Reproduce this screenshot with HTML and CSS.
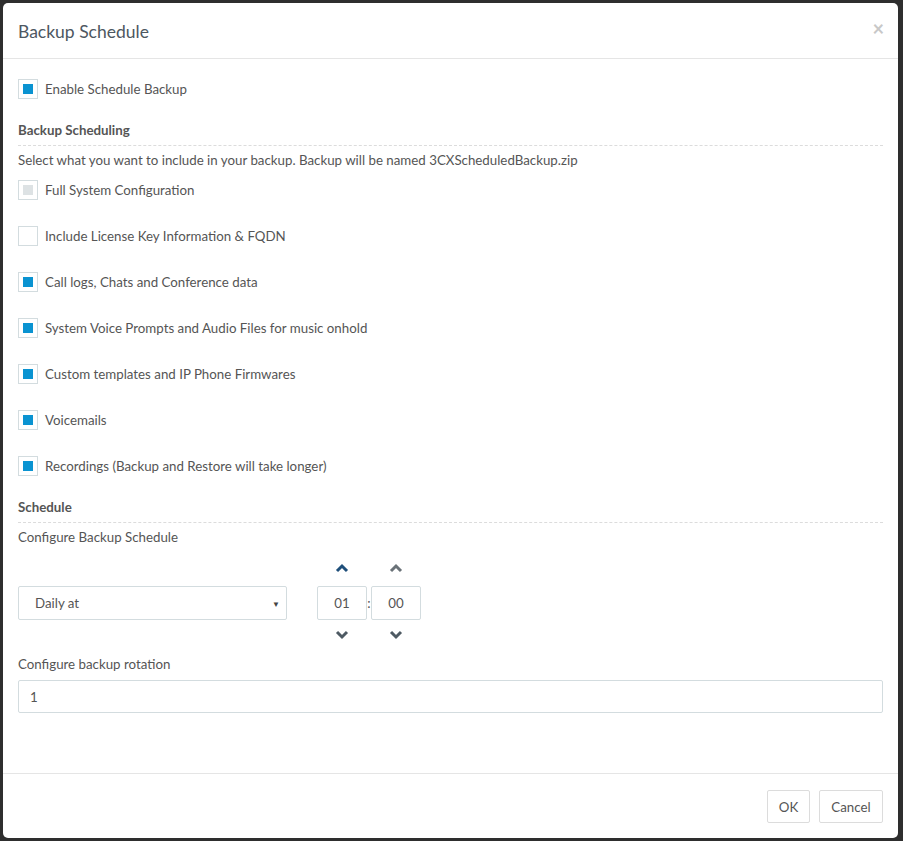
FILE: index.html
```html
<!DOCTYPE html>
<html>
<head>
    <meta charset="UTF-8">
    <title>Backup Schedule</title>
    <link rel="stylesheet" href="styles.css">
</head>
<body>
    <div class="modal">
        <div class="modal-header">
            <h3 class="modal-title">Backup Schedule</h3>
            <span class="close-btn">&times;</span>
        </div>

        <div class="modal-body">
            <label class="check-row">
                <span class="box checked"></span>
                <span>Enable Schedule Backup</span>
            </label>

            <h4 class="section-title">Backup Scheduling</h4>
            <div class="section-desc">Select what you want to include in your backup. Backup will be named 3CXScheduledBackup.zip</div>

            <div class="check-list">
                <label class="check-row"><span class="box disabled"></span><span>Full System Configuration</span></label>
                <label class="check-row"><span class="box"></span><span>Include License Key Information &amp; FQDN</span></label>
                <label class="check-row"><span class="box checked"></span><span>Call logs, Chats and Conference data</span></label>
                <label class="check-row"><span class="box checked"></span><span>System Voice Prompts and Audio Files for music onhold</span></label>
                <label class="check-row"><span class="box checked"></span><span>Custom templates and IP Phone Firmwares</span></label>
                <label class="check-row"><span class="box checked"></span><span>Voicemails</span></label>
                <label class="check-row"><span class="box checked"></span><span>Recordings (Backup and Restore will take longer)</span></label>
            </div>

            <h4 class="section-title schedule-title">Schedule</h4>
            <div class="section-desc">Configure Backup Schedule</div>

            <div class="schedule-row">
                <div class="select-box">
                    <span>Daily at</span>
                    <span class="caret">&#9660;</span>
                </div>
                <div class="time-picker">
                    <div class="time-col">
                        <svg class="chev up-active" width="14" height="24" viewBox="0 0 14 24"><polyline points="2,15 7,10 12,15" fill="none" stroke="currentColor" stroke-width="3"/></svg>
                        <div class="time-input">01</div>
                        <svg class="chev" width="14" height="24" viewBox="0 0 14 24"><polyline points="2,9 7,14 12,9" fill="none" stroke="currentColor" stroke-width="3"/></svg>
                    </div>
                    <div class="colon">:</div>
                    <div class="time-col">
                        <svg class="chev up-grey" width="14" height="24" viewBox="0 0 14 24"><polyline points="2,15 7,10 12,15" fill="none" stroke="currentColor" stroke-width="3"/></svg>
                        <div class="time-input">00</div>
                        <svg class="chev" width="14" height="24" viewBox="0 0 14 24"><polyline points="2,9 7,14 12,9" fill="none" stroke="currentColor" stroke-width="3"/></svg>
                    </div>
                </div>
            </div>

            <div class="field-label">Configure backup rotation</div>
            <div class="text-input">1</div>
        </div>

        <div class="modal-footer">
            <button class="btn btn-ok">OK</button>
            <button class="btn btn-cancel">Cancel</button>
        </div>
    </div>
</body>
</html>
```

FILE: styles.css
```css
body {
    margin: 0;
    background: #2e2e2e;
    font-family: Lato, "Open Sans", sans-serif;
    font-size: 13.3px;
    color: #555;
}

.modal {
    margin: 3px 0 0 3px;
    width: 895px;
    height: 835px;
    background: #fff;
    border-radius: 5px;
    display: flex;
    flex-direction: column;
}

.modal-header {
    height: 55px;
    border-bottom: 1px solid #e5e5e5;
    display: flex;
    align-items: center;
    justify-content: space-between;
    padding: 0 15px;
}

.modal-title {
    margin: 0;
    font-size: 17.5px;
    font-weight: normal;
    color: #4d5761;
    padding-top: 2px;
}

.close-btn {
    color: #c8c8c8;
    font-size: 20px;
    font-weight: bold;
    margin-top: -6px;
    margin-right: -1px;
}

.modal-body {
    flex: 1;
    padding: 20px 15px 0 15px;
}

.check-row {
    display: flex;
    align-items: center;
    gap: 7px;
    height: 20px;
    line-height: 20px;
}

.box {
    width: 18px;
    height: 18px;
    border: 1px solid #d3dcdf;
    box-sizing: content-box;
    position: relative;
}

.box.checked::after,
.box.disabled::after {
    content: "";
    position: absolute;
    left: 4px;
    top: 4px;
    width: 10px;
    height: 10px;
    background: #0a93d1;
}

.box.disabled::after {
    background: #dde2e4;
}

.section-title {
    margin: 21px 0 0 0;
    font-size: 13.3px;
    font-weight: bold;
    line-height: 20px;
    padding-bottom: 5px;
    border-bottom: 1px dashed #dcdcdc;
}

.schedule-title {
    margin-top: 21px;
}

.section-desc {
    margin-top: 4px;
    line-height: 20px;
}

.check-list {
    margin-top: 10px;
    display: flex;
    flex-direction: column;
    gap: 26px;
}

.schedule-row {
    display: flex;
    margin-top: 9px;
}

.select-box {
    margin-top: 30px;
    height: 32px;
    border: 1px solid #d3dcdf;
    border-radius: 2px;
    display: flex;
    align-items: center;
    justify-content: space-between;
    padding: 0 6px 0 16px;
    box-sizing: content-box;
    width: 245px;
}

.caret {
    font-size: 8px;
    color: #444;
    margin-top: 1px;
}

.time-picker {
    display: flex;
    margin-left: 30px;
}

.time-col {
    display: flex;
    flex-direction: column;
    align-items: center;
}

.time-input {
    margin: 6px 0 3px 0;
    width: 48px;
    height: 32px;
    border: 1px solid #d3dcdf;
    border-radius: 2px;
    display: flex;
    align-items: center;
    justify-content: center;
}

.chev {
    color: #4e5a63;
}

.chev.up-active {
    color: #1f4f7a;
}

.chev.up-grey {
    color: #6a7278;
}

.colon {
    width: 4px;
    margin-top: 30px;
    height: 34px;
    line-height: 34px;
    text-align: center;
}

.field-label {
    margin-top: 7px;
    line-height: 20px;
}

.text-input {
    margin-top: 6px;
    height: 31px;
    border: 1px solid #d3dcdf;
    border-radius: 2px;
    display: flex;
    align-items: center;
    padding-left: 11px;
}

.modal-footer {
    border-top: 1px solid #e5e5e5;
    margin-top: 1px;
    padding: 16px 15px 15px 0;
    display: flex;
    justify-content: flex-end;
    gap: 9px;
}

.btn {
    height: 33px;
    padding: 0;
    background: #fff;
    border: 1px solid #dcdcdc;
    border-radius: 2px;
    font-family: Lato, "Open Sans", sans-serif;
    font-size: 13.3px;
    color: #555;
}

.btn-ok {
    width: 43px;
}

.btn-cancel {
    width: 64px;
}
```
